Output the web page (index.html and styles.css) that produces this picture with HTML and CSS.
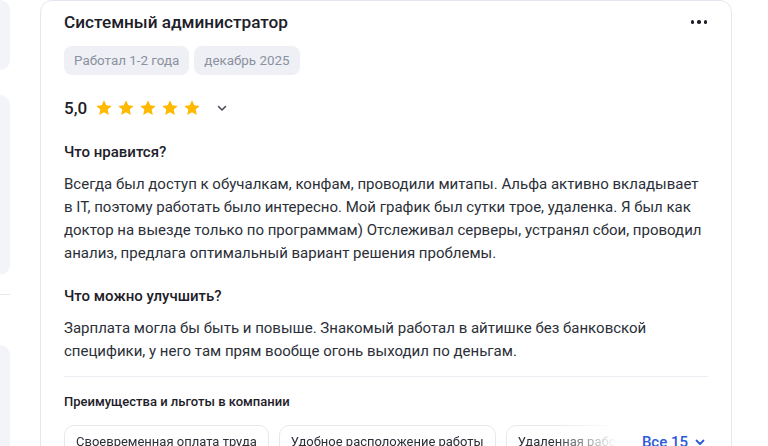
FILE: index.html
```html
<!DOCTYPE html>
<html lang="ru">
<head>
    <meta charset="UTF-8">
    <meta name="viewport" content="width=device-width, initial-scale=1.0">
    <title>Отзыв сотрудника</title>
    <link rel="stylesheet" href="styles.css">
</head>
<body>
    <div class="page">
        <aside class="side">
            <div class="side-block side-top"></div>
            <div class="side-block side-mid"></div>
            <div class="side-line"></div>
            <div class="side-block side-bottom"></div>
        </aside>

        <article class="review">
            <header class="review-head">
                <h2 class="review-title">Системный администратор</h2>
                <button class="more" aria-label="Ещё">
                    <span></span><span></span><span></span>
                </button>
            </header>

            <div class="tags">
                <span class="tag">Работал 1-2 года</span>
                <span class="tag">декабрь 2025</span>
            </div>

            <div class="rating">
                <span class="rating-value">5,0</span>
                <span class="stars">
                    <svg viewBox="0 0 24 24"><path d="M12 1.8l3.1 6.6 7.2.8-5.4 4.9 1.5 7.1L12 17.6l-6.4 3.6 1.5-7.1L1.7 9.2l7.2-.8z"/></svg>
                    <svg viewBox="0 0 24 24"><path d="M12 1.8l3.1 6.6 7.2.8-5.4 4.9 1.5 7.1L12 17.6l-6.4 3.6 1.5-7.1L1.7 9.2l7.2-.8z"/></svg>
                    <svg viewBox="0 0 24 24"><path d="M12 1.8l3.1 6.6 7.2.8-5.4 4.9 1.5 7.1L12 17.6l-6.4 3.6 1.5-7.1L1.7 9.2l7.2-.8z"/></svg>
                    <svg viewBox="0 0 24 24"><path d="M12 1.8l3.1 6.6 7.2.8-5.4 4.9 1.5 7.1L12 17.6l-6.4 3.6 1.5-7.1L1.7 9.2l7.2-.8z"/></svg>
                    <svg viewBox="0 0 24 24"><path d="M12 1.8l3.1 6.6 7.2.8-5.4 4.9 1.5 7.1L12 17.6l-6.4 3.6 1.5-7.1L1.7 9.2l7.2-.8z"/></svg>
                </span>
                <svg class="chevron" viewBox="0 0 12 12"><path d="M2.5 4.5L6 8l3.5-3.5"/></svg>
            </div>

            <section class="block">
                <h3 class="block-title">Что нравится?</h3>
                <p class="block-text">Всегда был доступ к обучалкам, конфам, проводили митапы. Альфа активно вкладывает в IT, поэтому работать было интересно. Мой график был сутки трое, удаленка. Я был как доктор на выезде только по программам) Отслеживал серверы, устранял сбои, проводил анализ, предлага оптимальный вариант решения проблемы.</p>
            </section>

            <section class="block">
                <h3 class="block-title">Что можно улучшить?</h3>
                <p class="block-text">Зарплата могла бы быть и повыше. Знакомый работал в айтишке без банковской специфики, у него там прям вообще огонь выходил по деньгам.</p>
            </section>

            <hr class="divider">

            <h4 class="perks-title">Преимущества и льготы в компании</h4>
            <div class="perks">
                <div class="perks-list">
                    <span class="perk">Своевременная оплата труда</span>
                    <span class="perk">Удобное расположение работы</span>
                    <span class="perk">Удаленная работа</span>
                    <span class="perk">Гибкий график</span>
                </div>
                <button class="all">Все 15
                    <svg viewBox="0 0 12 12"><path d="M2.5 4.5L6 8l3.5-3.5"/></svg>
                </button>
            </div>
        </article>
    </div>
</body>
</html>
```

FILE: styles.css
```css
*{
    margin: 0;
    padding: 0;
    box-sizing: border-box;
}

body{
    background: #fff;
    color: #1d2029;
    font-family: Roboto, 'Liberation Sans', sans-serif;
    overflow: hidden;
}

.page{
    display: grid;
    grid-template-columns: 10px 692px;
    column-gap: 30px;
    align-items: start;
}

/* left column, mostly off screen */
.side{
    display: flex;
    flex-direction: column;
}

.side-block{
    background: #f3f4f9;
    border-radius: 0 12px 12px 0;
}

.side-top{
    height: 70px;
}

.side-mid{
    height: 180px;
    margin-top: 25px;
}

.side-line{
    height: 1px;
    background: #e6e8ef;
    margin-top: 19px;
}

.side-bottom{
    height: 120px;
    margin-top: 50px;
}

/* review card */
.review{
    border: 1px solid #e4e7ef;
    border-radius: 12px;
    padding: 9px 23px 20px;
    min-height: 470px;
}

.review-head{
    display: flex;
    justify-content: space-between;
    align-items: center;
}

.review-title{
    font-size: 17.2px;
    line-height: 24px;
    font-weight: 500;
    color: #1d2029;
}

.more{
    display: flex;
    gap: 3px;
    border: none;
    background: none;
    padding: 4px 5px;
    margin-right: -4px;
}

.more span{
    width: 3.5px;
    height: 3.5px;
    border-radius: 50%;
    background: #1d2029;
}

.tags{
    display: flex;
    gap: 5px;
    margin-top: 12px;
}

.tag{
    background: #eef0f5;
    color: #8a91a0;
    font-size: 13.4px;
    line-height: 29px;
    padding: 0 10px;
    border-radius: 8px;
}

.rating{
    display: flex;
    align-items: center;
    height: 24px;
    margin-top: 21px;
}

.rating-value{
    font-size: 17px;
    font-weight: 500;
    color: #1d2029;
}

.stars{
    display: flex;
    gap: 4px;
    margin-left: 8px;
}

.stars svg{
    width: 18px;
    height: 18px;
    fill: #ffb900;
}

.chevron{
    width: 12px;
    height: 12px;
    margin-left: 15px;
    fill: none;
    stroke: #4a4f5a;
    stroke-width: 1.6;
    stroke-linecap: round;
    stroke-linejoin: round;
}

.block{
    margin-top: 21px;
}

.block + .block{
    margin-top: 20px;
}

.block-title{
    font-size: 15px;
    line-height: 22px;
    font-weight: 500;
    color: #1d2029;
}

.block-text{
    margin-top: 10px;
    font-size: 15px;
    line-height: 23px;
    color: #2b2f38;
}

.divider{
    border: none;
    border-top: 1px solid #eceef3;
    margin-top: 13px;
}

.perks-title{
    margin-top: 16px;
    font-size: 13px;
    line-height: 18px;
    font-weight: 500;
    color: #1d2029;
}

.perks{
    display: flex;
    align-items: center;
    margin-top: 14px;
}

.perks-list{
    display: flex;
    gap: 10px;
    flex: 1;
    overflow: hidden;
    -webkit-mask-image: linear-gradient(to right, #000 86%, transparent 97%);
    mask-image: linear-gradient(to right, #000 86%, transparent 97%);
}

.perk{
    flex-shrink: 0;
    border: 1px solid #e6e8ee;
    border-radius: 10px;
    padding: 6px 11px;
    font-size: 13px;
    line-height: 20px;
    color: #2b2f38;
}

.all{
    display: flex;
    align-items: center;
    gap: 6px;
    border: none;
    background: none;
    font-family: inherit;
    font-size: 15px;
    font-weight: 500;
    color: #2a5bd7;
    margin-left: 8px;
    padding-right: 2px;
}

.all svg{
    width: 12px;
    height: 12px;
    fill: none;
    stroke: #2a5bd7;
    stroke-width: 1.8;
    stroke-linecap: round;
    stroke-linejoin: round;
}
```
